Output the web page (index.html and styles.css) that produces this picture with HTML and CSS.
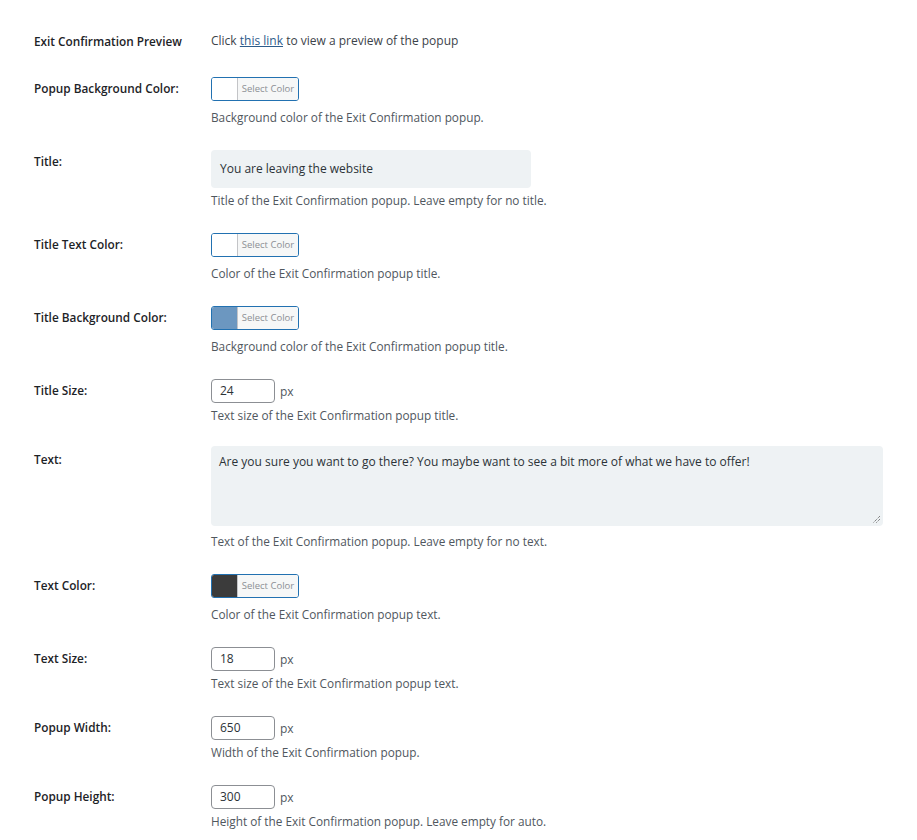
FILE: index.html
```html
<!DOCTYPE html>
<html lang="en">
<head>
<meta charset="utf-8">
<title>Exit Confirmation Settings</title>
<link rel="stylesheet" href="styles.css">
</head>
<body>
<div class="form-table">
  <div class="row row-first">
    <div class="label">Exit Confirmation Preview</div>
    <div class="field"><span class="plain">Click <a href="#" class="link">this link</a> to view a preview of the popup</span></div>
  </div>

  <div class="row">
    <div class="label">Popup Background Color:</div>
    <div class="field">
      <div class="picker"><span class="swatch swatch-white"></span><span class="picker-btn">Select Color</span></div>
      <p class="desc desc-picker">Background color of the Exit Confirmation popup.</p>
    </div>
  </div>

  <div class="row">
    <div class="label">Title:</div>
    <div class="field">
      <div class="text-input">You are leaving the website</div>
      <p class="desc">Title of the Exit Confirmation popup. Leave empty for no title.</p>
    </div>
  </div>

  <div class="row">
    <div class="label">Title Text Color:</div>
    <div class="field">
      <div class="picker"><span class="swatch swatch-white"></span><span class="picker-btn">Select Color</span></div>
      <p class="desc desc-picker">Color of the Exit Confirmation popup title.</p>
    </div>
  </div>

  <div class="row">
    <div class="label">Title Background Color:</div>
    <div class="field">
      <div class="picker"><span class="swatch swatch-blue"></span><span class="picker-btn">Select Color</span></div>
      <p class="desc desc-picker">Background color of the Exit Confirmation popup title.</p>
    </div>
  </div>

  <div class="row">
    <div class="label">Title Size:</div>
    <div class="field">
      <div class="num-wrap"><div class="num-input">24</div><span class="unit">px</span></div>
      <p class="desc">Text size of the Exit Confirmation popup title.</p>
    </div>
  </div>

  <div class="row">
    <div class="label">Text:</div>
    <div class="field">
      <div class="textarea">Are you sure you want to go there? You maybe want to see a bit more of what we have to offer!<svg class="grip" width="9" height="9" viewBox="0 0 9 9"><path d="M8 1 L1 8 M8 4 L4 8" stroke="#555" stroke-width="1" stroke-dasharray="1 1" fill="none"/></svg></div>
      <p class="desc desc-textarea">Text of the Exit Confirmation popup. Leave empty for no text.</p>
    </div>
  </div>

  <div class="row">
    <div class="label">Text Color:</div>
    <div class="field">
      <div class="picker"><span class="swatch swatch-dark"></span><span class="picker-btn">Select Color</span></div>
      <p class="desc desc-picker">Color of the Exit Confirmation popup text.</p>
    </div>
  </div>

  <div class="row">
    <div class="label">Text Size:</div>
    <div class="field">
      <div class="num-wrap"><div class="num-input">18</div><span class="unit">px</span></div>
      <p class="desc">Text size of the Exit Confirmation popup text.</p>
    </div>
  </div>

  <div class="row">
    <div class="label">Popup Width:</div>
    <div class="field">
      <div class="num-wrap"><div class="num-input">650</div><span class="unit">px</span></div>
      <p class="desc">Width of the Exit Confirmation popup.</p>
    </div>
  </div>

  <div class="row">
    <div class="label">Popup Height:</div>
    <div class="field">
      <div class="num-wrap"><div class="num-input">300</div><span class="unit">px</span></div>
      <p class="desc">Height of the Exit Confirmation popup. Leave empty for auto.</p>
    </div>
  </div>
</div>
</body>
</html>
```

FILE: styles.css
```css
* { box-sizing: border-box; }
html, body { margin: 0; padding: 0; background: #ffffff; }
body {
  font-family: "Open Sans", "Liberation Sans", sans-serif;
  font-size: 12px;
  color: #3c434a;
}
.form-table {
  padding-left: 34px;
  width: 917px;
}
.row {
  display: grid;
  grid-template-columns: 177px 672px;
  padding: 15px 0 9px;
}
.row-first {
  padding: 32px 0 12px;
  align-items: center;
}
.label {
  font-weight: 600;
  font-size: 11.8px;
  color: #1d2327;
  line-height: 18px;
  padding-top: 2px;
}
.row-first .label { padding-top: 0; }
.plain { line-height: 18px; display: block; color: #3c434a; }
.link { color: #2c5b8a; text-decoration: underline; }
.field { display: flex; flex-direction: column; align-items: flex-start; }
.desc {
  margin: 3px 0 0;
  line-height: 18px;
  color: #50575e;
  font-size: 11.8px;
}
.desc-picker { margin-top: 7px; }
.desc-textarea { margin-top: 6px; }
.picker {
  display: flex;
  height: 24px;
  width: 88px;
  border: 1px solid #2271b1;
  border-radius: 3px;
  overflow: hidden;
}
.swatch { width: 25px; height: 100%; flex: none; }
.swatch-white { background: #ffffff; }
.swatch-blue { background: #6c97c0; }
.swatch-dark { background: #3b3b3b; }
.picker-btn {
  flex: 1;
  background: #f6f7f7;
  border-left: 1px solid #c3c4c7;
  font-size: 9.5px;
  color: #8c8f94;
  line-height: 22px;
  text-align: center;
}
.text-input {
  width: 320px;
  height: 38px;
  background: #eef2f4;
  border-radius: 4px;
  padding: 0 9px;
  line-height: 38px;
  font-size: 12px;
  color: #2c3338;
}
.num-wrap { display: flex; align-items: center; }
.num-input {
  width: 64px;
  height: 24px;
  border: 1px solid #8c8f94;
  border-radius: 4px;
  padding: 0 8px;
  line-height: 22px;
  font-size: 12px;
  color: #2c3338;
}
.unit { margin-left: 5px; font-size: 12px; color: #50575e; }
.textarea {
  position: relative;
  width: 672px;
  height: 80px;
  margin-top: -2px;
  background: #eef2f4;
  border-radius: 4px;
  padding: 7px 8px;
  line-height: 18px;
  font-size: 12px;
  color: #2c3338;
}
.grip { position: absolute; right: 2px; bottom: 2px; }
```
